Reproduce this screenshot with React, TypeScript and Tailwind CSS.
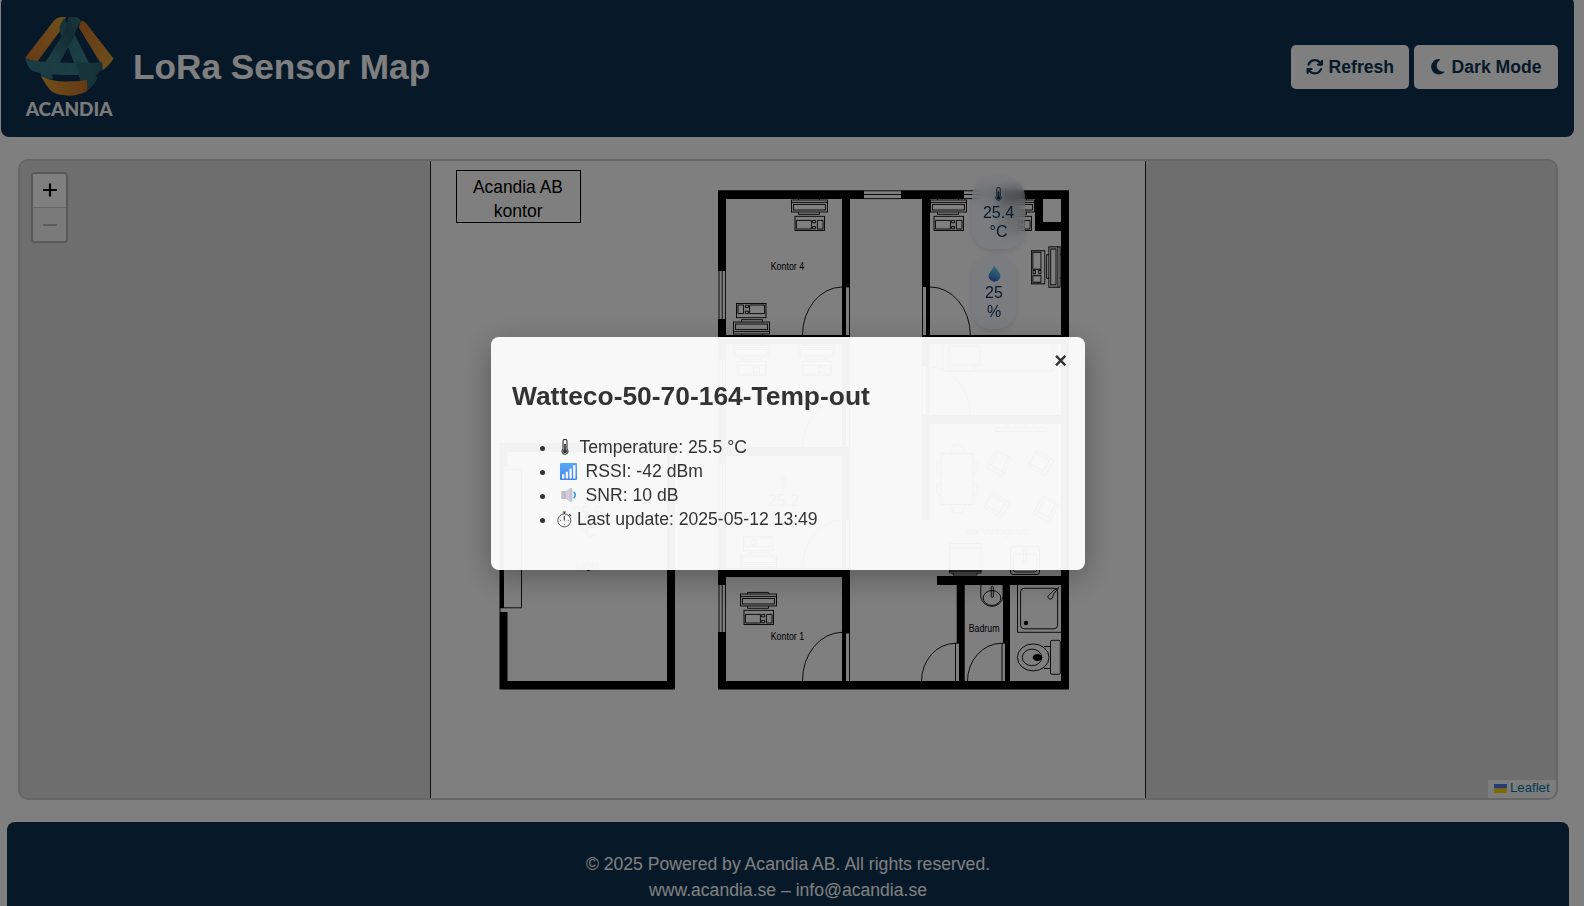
import React from "react";
import { FaArrowsRotate, FaMoon } from "react-icons/fa6";

function Logo() {
  return (
    <svg className="mt-px h-[102px] w-[89px] shrink-0 overflow-visible" viewBox="30 24 268 306" preserveAspectRatio="none">
      <defs>
        <linearGradient id="goldLeft" x1="1" y1="0" x2="0" y2="1">
          <stop offset="0" stopColor="#e0a236" />
          <stop offset="1" stopColor="#cf742c" />
        </linearGradient>
        <linearGradient id="goldRight" x1="0" y1="0" x2="1" y2="1">
          <stop offset="0" stopColor="#c96e2b" />
          <stop offset="1" stopColor="#dea238" />
        </linearGradient>
        <linearGradient id="goldBase" x1="0" y1="0" x2="1" y2="0">
          <stop offset="0" stopColor="#e0a234" />
          <stop offset="1" stopColor="#ca712b" />
        </linearGradient>
        <linearGradient id="tealDown" x1="0" y1="0" x2="1" y2="1">
          <stop offset="0" stopColor="#2c6672" />
          <stop offset="0.6" stopColor="#3a838f" />
          <stop offset="1" stopColor="#28606c" />
        </linearGradient>
        <linearGradient id="tealUp" x1="1" y1="0" x2="0" y2="1">
          <stop offset="0" stopColor="#33747f" />
          <stop offset="0.35" stopColor="#255864" />
          <stop offset="1" stopColor="#3f8893" />
        </linearGradient>
        <linearGradient id="tealBand" x1="0" y1="0" x2="1" y2="0">
          <stop offset="0" stopColor="#357681" />
          <stop offset="0.6" stopColor="#377e89" />
          <stop offset="1" stopColor="#275f6b" />
        </linearGradient>
      </defs>
      <path d="M154 27 L138 27 Q124 29 117 38 L30 150 Q46 158 68 160 L136 68 Q140 50 154 27Z" fill="url(#goldLeft)" />
      <path d="M201 38 Q193 44 193 60 L256 163 Q262 172 262 187 Q276 180 297 152 L214 46 Q208 38 201 38Z" fill="url(#goldRight)" />
      <path d="M148 30 Q134 48 134 64 L138 84 L162 122 L204 235 L217 248 Q244 226 246 210 Q236 190 226 172 L182 84 L165 66Z" fill="url(#tealDown)" />
      <path d="M30 151 Q58 161 92 162 L184 165 Q232 165 262 162 L264 186 Q252 192 246 200 L230 200 Q150 203 92 197 Q60 192 52 188 Q38 180 30 151Z" fill="url(#tealBand)" />
      <path d="M184 160 L226 166 L246 210 Q244 226 217 248 L204 235Z" fill="#2d6874" />
      <path d="M167 27 L185 27 Q197 31 198 40 Q180 70 180 82 L134 164 L92 162 L146 76 Q158 50 160 29Z" fill="url(#tealUp)" />
      <path d="M76 192 L111 198 L114 214 Q90 212 82 207 Q76 202 76 192Z" fill="#357681" />
      <path d="M78 205 Q120 224 165 220 Q200 220 216 216 L218 248 Q195 262 165 263 Q130 262 112 252 Q98 240 78 205Z" fill="url(#goldBase)" />
      <text x="32" y="325" textLength="262" lengthAdjust="spacingAndGlyphs" className="font-['Lato',sans-serif] text-[56px] font-black" fill="#f4f4f4">
        ACANDIA
      </text>
    </svg>
  );
}

function Thermometer({ className, color }: { className: string; color: string }) {
  return (
    <svg viewBox="0 0 8 16" className={className}>
      <path d="M2 2.4a2 2 0 0 1 4 0v7.6a3 3 0 1 1-4 0z" fill="none" stroke={color} strokeWidth="1.1" />
      <path d="M4 5v7" stroke={color} strokeWidth="1.7" />
      <circle cx="4" cy="12.3" r="2" fill={color} />
    </svg>
  );
}

function Droplet() {
  return (
    <svg viewBox="0 0 13 17" className="h-[17px] w-[13px]">
      <defs>
        <linearGradient id="drop" x1="0.6" y1="0" x2="0.3" y2="1">
          <stop offset="0" stopColor="#68d0e8" />
          <stop offset="0.55" stopColor="#4aa4dc" />
          <stop offset="1" stopColor="#4658cc" />
        </linearGradient>
      </defs>
      <path d="M6.5 0.5C8 4 12.4 7.6 12.4 11.2a5.9 5.5 0 0 1-11.8 0C.6 7.6 5 4 6.5.5z" fill="url(#drop)" />
    </svg>
  );
}

function Desk({ transform }: { transform: string }) {
  return (
    <g transform={transform} fill="none" stroke="#000" strokeWidth="0.9">
      <path d="M7.5 2v-1.6h21v1.6M7.5 14v2.3h21v-2.3" />
      <rect x="0.5" y="2" width="36" height="12" />
      <path d="M0.5 4.4h36" />
      <rect x="2.4" y="6.4" width="32" height="5.6" />
      <rect x="4" y="18.3" width="29.5" height="14.2" />
      <path d="M5.4 22.4h15v8.6h-15zM26.4 22.4h5.6v8.6h-5.6z" />
      <path d="M21.6 22.4h3v2.4h-3zM21.6 28.4h3v2.4h-3z" />
    </g>
  );
}

function Armchair({ transform }: { transform: string }) {
  return (
    <g transform={transform}>
      <rect x="-9" y="-10" width="18" height="20" rx="2" />
      <path d="M-6 -10v16h12v-16M-9 6h18" />
    </g>
  );
}

const walls = [
  "M718 190.3H864V199H726V271H718z",
  "M901 190.3H964V199H901z",
  "M1001 190.3H1069V689.5H718V632H726V681H1061V199H1001z",
  "M718 319H726V360H718zM718 408H726V464H718zM718 512H726V585H718z",
  "M842 195H850V287H842zM842 287H846V335H842z",
  "M726 335H850V344H726zM842 344H850V400H842zM842 400H846V447H842z",
  "M726 447H850V456H726zM842 456H850V520H842zM842 520H846V568H842z",
  "M726 568H850V577H726zM842 577H850V633H842zM842 633H846V681H842z",
  "M922 199H930V287H922zM926 287H930V335H926z",
  "M922 335H1061V344H922zM922 344H930V367H922zM926 367H930V415H926z",
  "M922 415H1061V424H922zM922 424H930V520H922z",
  "M1035 199H1043V222H1061V231H1035z",
  "M937 576H1061V585H937z",
  "M956.7 585H964.7V681H959V643H956.7z",
  "M1003 585H1010V681H1005V643H1003z",
  "M499.5 443H675V689.5H499.5V612H507.5V681H667V452H507.5V466H504V608H499.5z",
];

function FloorPlan() {
  return (
    <svg viewBox="431 161 714 637" className="block h-[637px] w-[714px]">
      <path d={walls.join("")} fill="#000" />
      <g fill="none" stroke="#000" strokeWidth="0.9">
        <path d="M864 190.8h37M864 194.5h37M864 198.6h37M964 190.8h37M964 194.5h37M964 198.6h37" />
        <path d="M719 271v48M722.2 271v48M725.5 271v48M719 360v48M722.2 360v48M725.5 360v48M719 464v48M722.2 464v48M725.5 464v48M719 585v47M722.2 585v47M725.5 585v47" />
        <path d="M849.5 287v48M849.5 400v47M849.5 520v48M849.5 633v48M846 287h4M846 633h4M922.5 287v48M922.5 367v48" />
        <path d="M842 287A40 48 0 0 0 802.5 335M842 400A40 47 0 0 0 802.5 447M842 520A40 48 0 0 0 802.5 568M842 632.3A40 48 0 0 0 802.5 681" />
        <path d="M930 287A40 48 0 0 1 970.3 335M930 367A40 48 0 0 1 970 415" />
        <path d="M959 643.3H955A34 38 0 0 0 921.5 681M955.5 643V681M1005 643.3H1001A34 38 0 0 0 967.5 681M1002 643V681" />
        <path d="M504 469.5h17.5v138.3h-22M500 608v4" />
        <path d="M943 344v27h110v-27M949 346h31v19h-31zM949 365v6h26v-6" />
        <path d="M995.5 427.5h51v4h-51zM1003 427l6-3M1038 427l-6-3M1016 424v3M1026 424v3" />
        <rect x="941" y="453.5" width="32" height="51" />
        <path d="M951 453l2-8h9l3 8M951 505l2 8h9l3-8M941 462h-4l-1 5 2 6h3M941 484h-4l-1 5 2 6h3M973 462h4l1 5-2 6h-3M973 484h4l1 5-2 6h-3" />
        <Armchair transform="translate(999 463) rotate(28)" />
        <Armchair transform="translate(1041 463) rotate(-60)" />
        <Armchair transform="translate(997 505) rotate(-58)" />
        <Armchair transform="translate(1046 509) rotate(28)" />
        <path d="M949.5 543.5h31.5v27.5h-31.5zM949.5 548h31.5M949.5 571h31.5v2h-31.5zM953 573v2h24v-2" />
        <rect x="1010.5" y="546.5" width="29" height="28" rx="2.5" />
        <rect x="1013" y="554" width="24" height="18" rx="3" />
        <rect x="1023.5" y="549" width="3" height="14" rx="1" />
        <path d="M980.8 585V597A11.3 11.5 0 0 0 1003 597V585" />
        <ellipse cx="992" cy="598" rx="8.8" ry="7.4" />
        <rect x="991.2" y="586.3" width="2.2" height="11" rx="1" />
        <path d="M1017.5 585V632.3H1061" />
        <rect x="1020.6" y="588.3" width="37" height="40.5" rx="3.5" />
        <path d="M1058.5 587.3L1053 591L1047.8 596.5A2.6 2.6 0 0 0 1052 598.5L1054 593.5L1058.5 588z" />
        <ellipse cx="1033.2" cy="657.4" rx="15.8" ry="13.5" />
        <ellipse cx="1032" cy="657.4" rx="9.7" ry="8.3" />
        <path d="M1044 646.5h6.5M1044 668.5h6.5" />
        <rect x="1050.5" y="640.3" width="9.8" height="34" rx="1.5" />
      </g>
      <circle cx="1026" cy="623" r="2.2" />
      <ellipse cx="1037.5" cy="657.5" rx="4.8" ry="3.5" />
      <Desk transform="translate(791 198)" />
      <Desk transform="translate(930 198)" />
      <Desk transform="translate(998 198)" />
      <Desk transform="translate(770 336) rotate(180)" />
      <Desk transform="translate(733 343)" />
      <Desk transform="translate(798 343)" />
      <Desk transform="translate(777 569) rotate(180)" />
      <Desk transform="translate(740 592)" />
      <Desk transform="translate(1062 246.3) rotate(90) scale(1.12 0.94)" />
      <rect x="456.5" y="170.5" width="124" height="52" fill="none" stroke="#000" />
      <g className="font-['Liberation_Sans',Arial,sans-serif] text-[18.5px]">
        <text x="473" y="193.3" textLength="89.8" lengthAdjust="spacingAndGlyphs">Acandia AB</text>
        <text x="493.7" y="216.5" textLength="49" lengthAdjust="spacingAndGlyphs">kontor</text>
      </g>
      <g className="font-['Liberation_Sans',Arial,sans-serif] text-[10px]">
        <text x="770.7" y="270" textLength="33.5" lengthAdjust="spacingAndGlyphs">Kontor 4</text>
        <text x="770.7" y="639.7" textLength="33.5" lengthAdjust="spacingAndGlyphs">Kontor 1</text>
        <text x="968.7" y="631.7" textLength="30.8" lengthAdjust="spacingAndGlyphs">Badrum</text>
        <text x="965.7" y="535" textLength="63" lengthAdjust="spacingAndGlyphs">kök/Vardagsrum</text>
        <text x="576" y="569" textLength="23" lengthAdjust="spacingAndGlyphs">Lager</text>
      </g>
    </svg>
  );
}

function SensorBadge({ className, icon, value, unit }: { className: string; icon: React.ReactNode; value: string; unit: string }) {
  return (
    <div className={"absolute flex flex-col items-center py-2 text-base leading-[19px] text-[#0e3252] " + className}>
      <span className="flex h-[19px] items-center">{icon}</span>
      <span>{value}</span>
      <span>{unit}</span>
    </div>
  );
}

function SignalIcon() {
  return (
    <svg viewBox="0 0 17 17" className="h-[17px] w-[17px]">
      <defs>
        <linearGradient id="signal" x1="0" y1="0" x2="0" y2="1">
          <stop offset="0" stopColor="#5aa8f8" />
          <stop offset="1" stopColor="#3f86e8" />
        </linearGradient>
      </defs>
      <rect width="17" height="17" rx="1" fill="url(#signal)" />
      <path d="M2 11.3h2.4V15.4H2zM5.7 8.8h2.4v6.6H5.7zM9.4 5.6h2.4v9.8H9.4zM13.1 2.2h2.4v13.2h-2.4z" fill="#f4f0ff" />
    </svg>
  );
}

function SpeakerIcon() {
  return (
    <svg viewBox="0 0 17 16" className="h-4 w-[17px]">
      <path d="M0.3 4h5v8h-5z" fill="#c2bccb" />
      <path d="M5 4L9.8.8q1.6 0 1.6 1.6v11q0 1.8-1.6 1.8L5 12z" fill="#d3cddb" />
      <path d="M10 1.2v13.6" stroke="#b4aebf" strokeWidth="0.8" />
      <path d="M12.6 4.8q3.6 2.9 0 6.4" stroke="#2f96ea" strokeWidth="1.5" fill="none" />
    </svg>
  );
}

function StopwatchIcon() {
  return (
    <svg viewBox="0 0 15 17" className="h-[17px] w-[15px]" fill="none" stroke="#444" strokeWidth="0.9">
      <circle cx="7.3" cy="9.4" r="6.5" />
      <path d="M5.6 1h3.4M7.3 1v2M7.3 5v4.6M12 3.2l2 1.8" strokeWidth="1.2" />
      <path d="M3 9.4h1M10.8 9.4h1M7.3 13v1" />
    </svg>
  );
}

const readings = [
  { icon: <Thermometer className="h-4 w-2" color="#333" />, pad: "pl-1", gap: "w-[22.5px]", text: "Temperature: 25.5 °C" },
  { icon: <SignalIcon />, pad: "pl-[3px]", gap: "w-[28.5px]", text: "RSSI: -42 dBm" },
  { icon: <SpeakerIcon />, pad: "pl-1", gap: "w-[28.5px]", text: "SNR: 10 dB" },
  { icon: <StopwatchIcon />, pad: "pl-0", gap: "w-5", text: "Last update: 2025-05-12 13:49" },
];

export default function App() {
  return (
    <div className="relative h-[906px] w-[1584px] overflow-hidden bg-white font-['Liberation_Sans',Arial,sans-serif]">
      <header className="ml-px -mt-1 flex h-[141px] w-[1573px] items-center justify-between rounded-lg bg-[#0e3252] pr-4 pl-6">
        <div className="flex items-center gap-[19px]">
          <Logo />
          <h1 className="text-[35.2px] leading-none font-bold text-white">LoRa Sensor Map</h1>
        </div>
        <div className="flex gap-[5px] text-[17.6px] font-bold text-[#0e3252]">
          <button className="flex h-11 w-[118px] items-center gap-[5px] rounded-[5px] bg-white pt-px pl-[15px]">
            <FaArrowsRotate className="-mt-px h-[17.6px] w-[17.6px]" />
            Refresh
          </button>
          <button className="flex h-11 w-36 items-center gap-[5px] rounded-[5px] bg-white pt-px pl-[15px]">
            <FaMoon className="-mt-px h-[17.6px] w-[17.6px]" />
            Dark Mode
          </button>
        </div>
      </header>

      <main className="relative mt-[22px] ml-[18px] flex h-[641px] w-[1540px] overflow-hidden rounded-[10px] border-2 border-[#ccc] bg-[#ddd]">
        <div className="ml-[410px] w-[716px] border-x border-[#222] bg-white">
          <FloorPlan />
        </div>
        <SensorBadge
          className="top-4 left-[952px] h-[72px] w-[53px] rounded-[20px] bg-[#eaf3fd]/50 shadow-[0_2px_6px_rgba(0,0,0,0.12)] backdrop-blur-[6px]"
          icon={<Thermometer className="h-[14px] w-[7px]" color="#0e3252" />}
          value="25.4"
          unit="°C"
        />
        <SensorBadge
          className="top-[95px] left-[952px] h-[73px] w-[44px] rounded-[20px] bg-[#eaf3fd]/50 shadow-[0_2px_6px_rgba(0,0,0,0.12)] backdrop-blur-[6px]"
          icon={<Droplet />}
          value="25"
          unit="%"
        />
        <SensorBadge
          className="top-[303px] left-[737px] h-[73px] w-[53px]"
          icon={<Thermometer className="h-[14px] w-[7px]" color="#0e3252" />}
          value="25.2"
          unit="°C"
        />
        <SensorBadge className="top-[315px] left-[541px] h-[73px] w-[53px]" icon={null} value="25.5" unit="°C" />
        <div className="absolute top-[11px] left-[11px] w-[37px] rounded-[4px] border-2 border-black/20 bg-clip-padding">
          <div className="flex h-[34px] items-center justify-center rounded-t-[2px] border-b border-[#ccc] bg-white">
            <svg viewBox="0 0 14 14" className="mb-px h-[14px] w-[14px]">
              <path d="M0 7h14M7 0.5v13" stroke="#000" strokeWidth="2.2" />
            </svg>
          </div>
          <div className="flex h-[33px] items-center justify-center rounded-b-[2px] bg-[#f4f4f4]">
            <svg viewBox="0 0 14 14" className="h-[14px] w-[14px]">
              <path d="M0 7h14" stroke="#bbb" strokeWidth="2" />
            </svg>
          </div>
        </div>
        <div className="absolute right-0 bottom-0 flex h-[18px] w-[68px] items-center bg-white/80 pb-0.5 pl-1.5 text-[13.2px] leading-none text-[#0078a8]">
          <svg viewBox="0 0 13 9" className="mt-px mr-[3px] h-[9px] w-[13px]">
            <path fill="#4c7be1" d="M0 0h13v4.5H0z" />
            <path fill="#ffd500" d="M0 4.5h13V9H0z" />
          </svg>
          Leaflet
        </div>
      </main>

      <footer className="mt-[22px] ml-[7px] h-[120px] w-[1562px] rounded-lg bg-[#0e3252] pt-[29px] text-center text-[17.6px] leading-[26px] text-white">
        <p>© 2025 Powered by Acandia AB. All rights reserved.</p>
        <p>www.acandia.se – info@acandia.se</p>
      </footer>

      <div className="absolute inset-0 bg-black/50">
        <section className="relative mt-[337px] ml-[491px] h-[233px] w-[594px] rounded-lg bg-white/95 pt-[43px] pl-[21px] text-[#333] shadow-[0_8px_30px_rgba(0,0,0,0.3)]">
          <button className="absolute top-[12px] right-[18px] text-[22px] leading-6 font-bold">×</button>
          <h2 className="text-[26.4px] leading-8 font-bold">Watteco-50-70-164-Temp-out</h2>
          <ul className="mt-[23px] text-[17.6px] leading-6">
            {readings.map((r) => (
              <li key={r.text} className="flex h-6 items-center pl-[28px]">
                <span className="mt-[2px] mr-[14px] h-[5px] w-[5px] rounded-full bg-[#333]" />
                <span className={"ml-[-2px] flex h-6 shrink-0 items-center " + r.gap}>
                  <span className={r.pad}>{r.icon}</span>
                </span>
                {r.text}
              </li>
            ))}
          </ul>
        </section>
      </div>
    </div>
  );
}
